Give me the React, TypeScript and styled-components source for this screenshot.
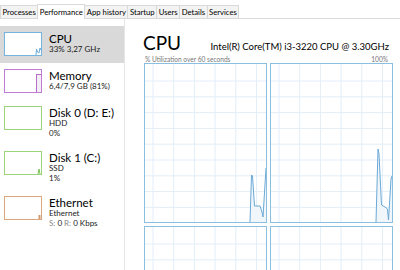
import React from "react";
import styled, { createGlobalStyle } from "styled-components";

const GlobalStyle = createGlobalStyle`
  html, body { margin: 0; padding: 0; background: #fff; }
  body { font-family: "Segoe UI", Lato, "Noto Sans", sans-serif; color: #000; overflow: hidden; }
`;

const Window = styled.div`
  width: 400px;
  height: 270px;
  display: flex;
  flex-direction: column;
  background: #fff;
`;

const TabStrip = styled.div`
  display: flex;
  align-items: flex-end;
  height: 19px;
  padding-top: 3px;
  box-sizing: border-box;
  border-bottom: 1px solid #d9d9d9;
  background: #fff;
`;

const Tab = styled.div<{ $active?: boolean }>`
  height: ${(p) => (p.$active ? 15 : 13)}px;
  line-height: ${(p) => (p.$active ? 14 : 12)}px;
  padding: 0 1.5px;
  font-size: 7.7px;
  color: #000;
  background: ${(p) => (p.$active ? "#fff" : "#f3f3f3")};
  border: 1px solid #d9d9d9;
  border-bottom: none;
  margin-bottom: ${(p) => (p.$active ? -1 : 0)}px;
  margin-right: -1px;
  box-sizing: border-box;
  white-space: nowrap;
  position: relative;
  z-index: ${(p) => (p.$active ? 1 : 0)};
`;

const Body = styled.div`
  flex: 1;
  display: flex;
  min-height: 0;
`;

const Sidebar = styled.div`
  width: 124px;
  padding-top: 7px;
  margin-right: 2px;
  border-right: 1px solid #e6e6e6;
  box-sizing: content-box;
`;

const Item = styled.div<{ $selected?: boolean }>`
  display: flex;
  gap: 7px;
  padding: 6px 4px 7px;
  background: ${(p) => (p.$selected ? "#d9d9d9" : "transparent")};
`;

const Thumb = styled.div<{ $color: string }>`
  width: 38px;
  height: 24px;
  box-sizing: border-box;
  border: 1px solid ${(p) => p.$color};
  background: #fff;
  flex: none;
  svg { display: block; }
`;

const ItemText = styled.div`
  display: flex;
  flex-direction: column;
`;

const ItemTitle = styled.div`
  font-size: 11.5px;
  line-height: 12px;
  margin-top: 1px;
`;

const ItemSub = styled.div`
  font-size: 8px;
  line-height: 9.5px;
  color: #222;
`;

const Faint = styled.span`
  color: #888;
`;

const Main = styled.div`
  flex: 1;
  padding: 12px 8px 0 17px;
  display: flex;
  flex-direction: column;
  min-width: 0;
`;

const Header = styled.div`
  display: flex;
  align-items: baseline;
  justify-content: space-between;
  padding-right: 3px;
`;

const BigTitle = styled.div`
  font-size: 19px;
  line-height: 24px;
  margin-left: -1px;
`;

const Model = styled.div`
  font-size: 9.5px;
`;

const Caption = styled.div`
  display: flex;
  justify-content: space-between;
  font-size: 6.6px;
  color: #777;
  line-height: 8px;
  padding: 0 4px 0 1px;
`;

const GraphGrid = styled.div`
  display: grid;
  grid-template-columns: 123px 123px;
  column-gap: 3px;
  row-gap: 3px;
`;

const Graph = styled.div`
  height: 160px;
  box-sizing: border-box;
  border: 1px solid #8bbfe0;
  svg { display: block; }
`;

const W = 121;
const H = 158;

function GraphSvg({ points }: { points: [number, number][] }) {
  const vx = [8, 28.7, 49.4, 70.1, 90.8, 111.5];
  const hy = Array.from({ length: 9 }, (_, i) => 17 + i * 15.8);
  const line = points.map((p, i) => `${i ? "L" : "M"}${p[0]} ${p[1]}`).join(" ");
  const area = points.length ? `${line} L${points[points.length - 1][0]} ${H} Z` : "";
  return (
    <svg width={W} height={H} viewBox={`0 0 ${W} ${H}`}>
      {vx.map((x) => (
        <line key={"v" + x} x1={x} x2={x} y1={0} y2={H} stroke="#e2eef8" strokeWidth={1} />
      ))}
      {hy.map((y) => (
        <line key={"h" + y} x1={0} x2={W} y1={y} y2={y} stroke="#e2eef8" strokeWidth={1} />
      ))}
      {points.length > 0 && <path d={area} fill="#f1f6fb" />}
      {points.length > 0 && <path d={line} fill="none" stroke="#6aa9d6" strokeWidth={1} />}
    </svg>
  );
}

const cpu0: [number, number][] = [
  [105, 158], [106.5, 111], [107.5, 112], [109.5, 142], [115, 142], [117, 148], [118, 153], [121, 104],
];
const cpu1: [number, number][] = [
  [105, 158], [107, 85], [108, 90], [110.5, 141], [114, 143], [116.5, 145], [117.5, 156], [120, 115], [121, 112],
];

export default function App() {
  return (
    <Window>
      <GlobalStyle />
      <TabStrip>
        <Tab>Processes</Tab>
        <Tab $active>Performance</Tab>
        <Tab>App history</Tab>
        <Tab>Startup</Tab>
        <Tab>Users</Tab>
        <Tab>Details</Tab>
        <Tab>Services</Tab>
      </TabStrip>
      <Body>
        <Sidebar>
          <Item $selected>
            <Thumb $color="#75b4de">
              <svg width={36} height={22} viewBox="0 0 36 22">
                <path d="M31 22 L31.5 16 L32.5 19 L34 20 L35 15 L36 17" fill="none" stroke="#6aa9d6" strokeWidth={1} />
              </svg>
            </Thumb>
            <ItemText>
              <ItemTitle>CPU</ItemTitle>
              <ItemSub>33% 3,27 GHz</ItemSub>
            </ItemText>
          </Item>
          <Item>
            <Thumb $color="#c27bd4">
              <svg width={36} height={22} viewBox="0 0 36 22">
                <rect x={31.5} y={4.5} width={5} height={18} fill="#f2eef3" stroke="#b56ccb" strokeWidth={1} />
              </svg>
            </Thumb>
            <ItemText>
              <ItemTitle>Memory</ItemTitle>
              <ItemSub>6,4/7,9 GB (81%)</ItemSub>
            </ItemText>
          </Item>
          <Item>
            <Thumb $color="#9bd47a" />
            <ItemText>
              <ItemTitle>Disk 0 (D: E:)</ItemTitle>
              <ItemSub>HDD</ItemSub>
              <ItemSub>0%</ItemSub>
            </ItemText>
          </Item>
          <Item>
            <Thumb $color="#9bd47a">
              <svg width={36} height={22} viewBox="0 0 36 22">
                <path d="M33 22 L34 17 L35 22" fill="none" stroke="#7cc456" strokeWidth={1} />
              </svg>
            </Thumb>
            <ItemText>
              <ItemTitle>Disk 1 (C:)</ItemTitle>
              <ItemSub>SSD</ItemSub>
              <ItemSub>1%</ItemSub>
            </ItemText>
          </Item>
          <Item>
            <Thumb $color="#dba780">
              <svg width={36} height={22} viewBox="0 0 36 22">
                <rect x={33.5} y={18} width={2} height={4} fill="#d29a6e" />
              </svg>
            </Thumb>
            <ItemText>
              <ItemTitle>Ethernet</ItemTitle>
              <ItemSub>Ethernet</ItemSub>
              <ItemSub>
                <Faint>S:</Faint> 0 <Faint>R:</Faint> 0 Kbps
              </ItemSub>
            </ItemText>
          </Item>
        </Sidebar>
        <Main>
          <Header>
            <BigTitle>CPU</BigTitle>
            <Model>Intel(R) Core(TM) i3-3220 CPU @ 3.30GHz</Model>
          </Header>
          <Caption>
            <span>% Utilization over 60 seconds</span>
            <span>100%</span>
          </Caption>
          <GraphGrid>
            <Graph><GraphSvg points={cpu0} /></Graph>
            <Graph><GraphSvg points={cpu1} /></Graph>
            <Graph><GraphSvg points={[]} /></Graph>
            <Graph><GraphSvg points={[]} /></Graph>
          </GraphGrid>
        </Main>
      </Body>
    </Window>
  );
}
